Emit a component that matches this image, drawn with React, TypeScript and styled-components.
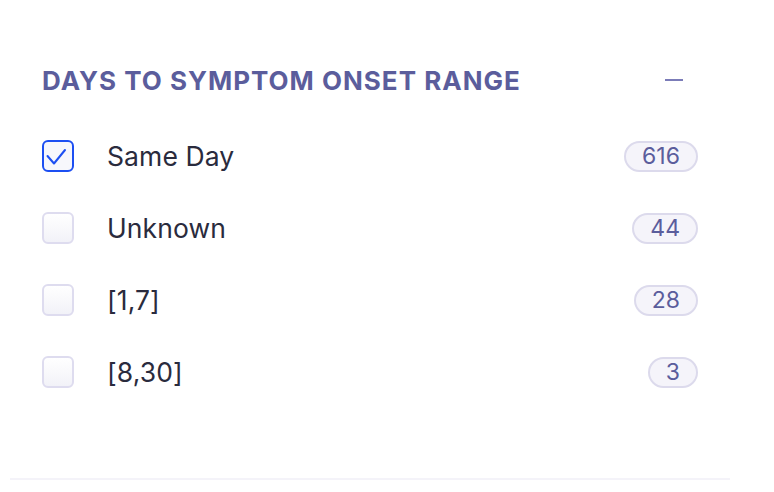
import React, { useState } from "react";
import styled, { createGlobalStyle } from "styled-components";

const GlobalStyle = createGlobalStyle`
  html, body {
    margin: 0;
    padding: 0;
    background: #ffffff;
  }
  body {
    font-family: Inter, "Noto Sans", "Liberation Sans", sans-serif;
    -webkit-font-smoothing: antialiased;
  }
`;

const Panel = styled.section`
  width: 720px;
  margin-left: 10px;
  box-sizing: border-box;
  padding: 62px 32px 70px;
  border-bottom: 2px solid #f4f3f9;
`;

const Header = styled.div`
  height: 36px;
  display: flex;
  align-items: center;
  justify-content: space-between;
`;

const Title = styled.h2`
  margin: 0;
  font-size: 26px;
  font-weight: 700;
  letter-spacing: 1px;
  text-transform: uppercase;
  color: #5b5d9c;
`;

const CollapseButton = styled.button`
  width: 48px;
  height: 36px;
  padding: 0;
  border: none;
  background: transparent;
  display: flex;
  align-items: center;
  justify-content: center;
  cursor: pointer;
  span {
    display: block;
    width: 18px;
    height: 2px;
    background: #7b7cb8;
  }
`;

const OptionList = styled.ul`
  list-style: none;
  margin: 22px 0 0;
  padding: 0;
`;

const Option = styled.li`
  height: 72px;
  display: flex;
  align-items: center;
  cursor: pointer;
`;

const Box = styled.span<{ checked: boolean }>`
  width: 32px;
  height: 32px;
  box-sizing: border-box;
  border-radius: 6px;
  border: 2px solid ${(p) => (p.checked ? "#1d4ff2" : "#dedcef")};
  background: ${(p) =>
    p.checked ? "#f7f7fc" : "linear-gradient(180deg, #ffffff 0%, #f2f2f8 100%)"};
  flex-shrink: 0;
  position: relative;
  svg {
    position: absolute;
    left: -2px;
    top: -2px;
  }
`;

const Label = styled.span`
  margin-left: 33px;
  flex: 1;
  font-size: 26.5px;
  letter-spacing: 0.1px;
  color: #2a2b3d;
`;

const Count = styled.span`
  height: 31px;
  box-sizing: border-box;
  padding: 0 16px;
  border-radius: 16px;
  border: 2px solid #dcdaec;
  background: #f5f4fa;
  display: flex;
  align-items: center;
  font-size: 23px;
  color: #5b5d9c;
`;

const options = [
  { label: "Same Day", count: 616 },
  { label: "Unknown", count: 44 },
  { label: "[1,7]", count: 28 },
  { label: "[8,30]", count: 3 },
];

export default function App() {
  const [selected, setSelected] = useState<string[]>(["Same Day"]);

  const toggle = (label: string) => {
    setSelected((prev) =>
      prev.includes(label) ? prev.filter((l) => l !== label) : [...prev, label]
    );
  };

  return (
    <>
      <GlobalStyle />
      <Panel>
        <Header>
          <Title>Days to Symptom Onset Range</Title>
          <CollapseButton aria-label="Collapse">
            <span />
          </CollapseButton>
        </Header>
        <OptionList>
          {options.map((o) => {
            const checked = selected.includes(o.label);
            return (
              <Option key={o.label} onClick={() => toggle(o.label)}>
                <Box checked={checked}>
                  {checked && (
                    <svg width="32" height="32" viewBox="0 0 32 32">
                      <polyline
                        points="5.5,16 12,23.5 23,10"
                        fill="none"
                        stroke="#1d4ff2"
                        strokeWidth="2"
                        strokeLinecap="round"
                        strokeLinejoin="round"
                      />
                    </svg>
                  )}
                </Box>
                <Label>{o.label}</Label>
                <Count>{o.count}</Count>
              </Option>
            );
          })}
        </OptionList>
      </Panel>
    </>
  );
}
